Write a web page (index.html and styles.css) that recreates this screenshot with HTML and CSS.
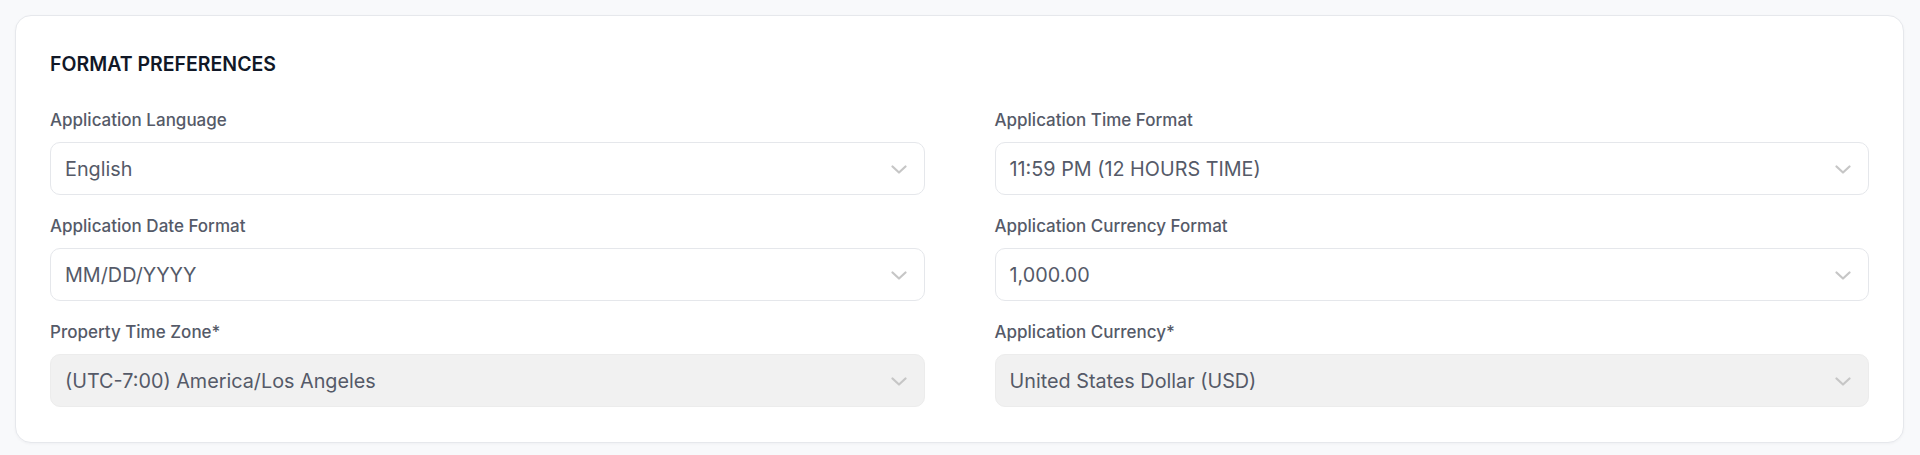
FILE: index.html
```html
<!DOCTYPE html>
<html lang="en">
<head>
<meta charset="utf-8">
<title>Format Preferences</title>
<link rel="stylesheet" href="styles.css">
</head>
<body>
<main class="page">
  <section class="card">
    <h2 class="card-title">FORMAT PREFERENCES</h2>
    <div class="grid">
      <div class="field">
        <label class="field-label">Application Language</label>
        <div class="select">
          <span class="select-value">English</span>
          <svg class="chev" viewBox="0 0 16 9" width="16" height="9"><path d="M1.5 1.5 L8 7.5 L14.5 1.5" fill="none" stroke="currentColor" stroke-width="2.2" stroke-linecap="round" stroke-linejoin="round"/></svg>
        </div>
      </div>
      <div class="field">
        <label class="field-label">Application Time Format</label>
        <div class="select">
          <span class="select-value">11:59 PM (12 HOURS TIME)</span>
          <svg class="chev" viewBox="0 0 16 9" width="16" height="9"><path d="M1.5 1.5 L8 7.5 L14.5 1.5" fill="none" stroke="currentColor" stroke-width="2.2" stroke-linecap="round" stroke-linejoin="round"/></svg>
        </div>
      </div>
      <div class="field">
        <label class="field-label">Application Date Format</label>
        <div class="select">
          <span class="select-value">MM/DD/YYYY</span>
          <svg class="chev" viewBox="0 0 16 9" width="16" height="9"><path d="M1.5 1.5 L8 7.5 L14.5 1.5" fill="none" stroke="currentColor" stroke-width="2.2" stroke-linecap="round" stroke-linejoin="round"/></svg>
        </div>
      </div>
      <div class="field">
        <label class="field-label">Application Currency Format</label>
        <div class="select">
          <span class="select-value">1,000.00</span>
          <svg class="chev" viewBox="0 0 16 9" width="16" height="9"><path d="M1.5 1.5 L8 7.5 L14.5 1.5" fill="none" stroke="currentColor" stroke-width="2.2" stroke-linecap="round" stroke-linejoin="round"/></svg>
        </div>
      </div>
      <div class="field">
        <label class="field-label">Property Time Zone*</label>
        <div class="select disabled">
          <span class="select-value">(UTC-7:00) America/Los Angeles</span>
          <svg class="chev" viewBox="0 0 16 9" width="16" height="9"><path d="M1.5 1.5 L8 7.5 L14.5 1.5" fill="none" stroke="currentColor" stroke-width="2.2" stroke-linecap="round" stroke-linejoin="round"/></svg>
        </div>
      </div>
      <div class="field">
        <label class="field-label">Application Currency*</label>
        <div class="select disabled">
          <span class="select-value">United States Dollar (USD)</span>
          <svg class="chev" viewBox="0 0 16 9" width="16" height="9"><path d="M1.5 1.5 L8 7.5 L14.5 1.5" fill="none" stroke="currentColor" stroke-width="2.2" stroke-linecap="round" stroke-linejoin="round"/></svg>
        </div>
      </div>
    </div>
  </section>
</main>
</body>
</html>
```

FILE: styles.css
```css
* { box-sizing: border-box; }
html, body { margin: 0; padding: 0; }
body {
  background: #f8f9fb;
  font-family: Inter, "Noto Sans", sans-serif;
  color: #4b5160;
}
.page {
  padding: 15px 16px 15px 15px;
}
.card {
  background: #ffffff;
  border: 1px solid #e6e8ec;
  border-radius: 16px;
  box-shadow: 0 1px 3px rgba(16, 24, 40, 0.04);
  padding: 34px 34px 35px 34px;
}
.card-title {
  margin: 0 0 30px 0;
  font-size: 19.5px;
  line-height: 28px;
  font-weight: 600;
  color: #111827;
}
.grid {
  display: grid;
  grid-template-columns: 1fr 1fr;
  column-gap: 70px;
  row-gap: 19px;
}
.field {
  display: flex;
  flex-direction: column;
}
.field-label {
  font-size: 17px;
  line-height: 24px;
  font-weight: 500;
  color: #555a68;
  margin-bottom: 10px;
}
.select {
  height: 53px;
  border: 1px solid #e5e7eb;
  border-radius: 10px;
  background: #ffffff;
  display: flex;
  align-items: center;
  justify-content: space-between;
  padding: 0 17px 0 14px;
}
.select.disabled {
  background: #f1f1f1;
  border-color: #ececec;
}
.select-value {
  font-size: 19.8px;
  color: #555a68;
}
.chev {
  color: #c6c6c6;
  margin-top: 2px;
}
```
